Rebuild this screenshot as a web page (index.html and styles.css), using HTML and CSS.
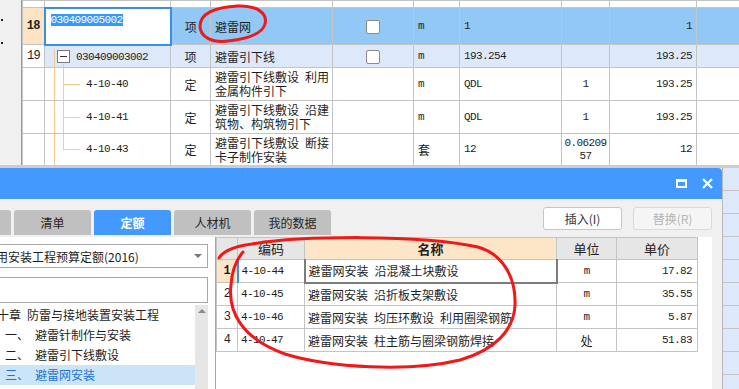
FILE: index.html
```html
<!DOCTYPE html>
<html lang="zh-CN">
<head>
    <meta charset="UTF-8">
    <title>查询定额</title>
    <link rel="stylesheet" href="styles.css">
</head>
<body>

    <!-- upper budget grid -->
    <div class="grid-area">
        <div class="side-strip">
            <span class="dot"></span>
            <span class="dot"></span>
        </div>
        <table class="grid">
            <colgroup>
                <col class="g-rn"><col class="g-code"><col class="g-type"><col class="g-name"><col class="g-chk">
                <col class="g-unit"><col class="g-qty"><col class="g-c8"><col class="g-c9"><col class="g-c10">
            </colgroup>
            <tr class="r-top">
                <td></td><td></td><td></td><td></td><td></td><td></td><td></td><td></td><td></td><td></td>
            </tr>
            <tr class="r-cur">
                <td class="rn cur mono">18</td>
                <td class="edit"><span class="sel mono">030409005002</span></td>
                <td class="ctr">项</td>
                <td>避雷网</td>
                <td class="ctr"><span class="chk"></span></td>
                <td class="mono">m</td>
                <td class="mono">1</td>
                <td></td>
                <td class="num mono">1</td>
                <td></td>
            </tr>
            <tr class="r-sub">
                <td class="rn mono">19</td>
                <td class="root"><span class="fold"></span><span class="mono">030409003002</span></td>
                <td class="ctr">项</td>
                <td>避雷引下线</td>
                <td class="ctr"><span class="chk"></span></td>
                <td class="mono">m</td>
                <td class="mono">193.254</td>
                <td></td>
                <td class="num mono">193.25</td>
                <td></td>
            </tr>
            <tr class="r-item">
                <td class="rn"></td>
                <td class="leaf mono">4-10-40</td>
                <td class="ctr">定</td>
                <td class="two">避雷引下线敷设&ensp;利用<br>金属构件引下</td>
                <td></td>
                <td class="mono">m</td>
                <td class="mono">QDL</td>
                <td class="ctr mono">1</td>
                <td class="num mono">193.25</td>
                <td></td>
            </tr>
            <tr class="r-item">
                <td class="rn"></td>
                <td class="leaf mono">4-10-41</td>
                <td class="ctr">定</td>
                <td class="two">避雷引下线敷设&ensp;沿建<br>筑物、构筑物引下</td>
                <td></td>
                <td class="mono">m</td>
                <td class="mono">QDL</td>
                <td class="ctr mono">1</td>
                <td class="num mono">193.25</td>
                <td></td>
            </tr>
            <tr class="r-item r-last">
                <td class="rn"></td>
                <td class="leaf last mono">4-10-43</td>
                <td class="ctr">定</td>
                <td class="two">避雷引下线敷设&ensp;断接<br>卡子制作安装</td>
                <td></td>
                <td>套</td>
                <td class="mono">12</td>
                <td class="ctr mono wrap">0.0620957</td>
                <td class="num mono">12</td>
                <td></td>
            </tr>
        </table>
    </div>

    <!-- quota lookup dialog -->
    <div class="lower">
        <div class="dialog">
            <div class="titlebar">
                <span class="tb-max"></span>
                <svg class="tb-close" width="11" height="11" viewBox="0 0 11 11">
                    <path d="M1 1 L10 10 M10 1 L1 10" stroke="#fff" stroke-width="2.2" fill="none"/>
                </svg>
            </div>
            <div class="dlg-body">
                <div class="toolbar">
                    <div class="tabs">
                        <span class="tab">指引</span>
                        <span class="tab">清单</span>
                        <span class="tab active">定额</span>
                        <span class="tab">人材机</span>
                        <span class="tab">我的数据</span>
                    </div>
                    <div class="actions">
                        <button class="btn">插入(I)</button>
                        <button class="btn" disabled>替换(R)</button>
                    </div>
                </div>
                <div class="panes">
                    <div class="lib-pane">
                        <div class="select">
                            <span class="select-text">用安装工程预算定额(2016)</span>
                            <span class="caret"></span>
                        </div>
                        <div class="search"></div>
                        <div class="tree">
                            <ul class="tree-list">
                                <li class="chapter">十章&ensp;防雷与接地装置安装工程</li>
                                <li><span class="ord">一、</span>避雷针制作与安装</li>
                                <li><span class="ord">二、</span>避雷引下线敷设</li>
                                <li class="picked"><span class="ord">三、</span>避雷网安装</li>
                            </ul>
                            <div class="scroll"></div>
                        </div>
                    </div>
                    <div class="list-pane">
                        <table class="list">
                            <colgroup>
                                <col class="l-rn"><col class="l-code"><col class="l-name"><col class="l-unit"><col class="l-price">
                            </colgroup>
                            <tr>
                                <th></th>
                                <th>编码</th>
                                <th class="hl">名称</th>
                                <th>单位</th>
                                <th>单价</th>
                            </tr>
                            <tr>
                                <td class="rn cur mono">1</td>
                                <td class="code cur mono">4-10-44</td>
                                <td class="focus">避雷网安装&ensp;沿混凝土块敷设</td>
                                <td class="ctr mono">m</td>
                                <td class="num mono">17.82</td>
                            </tr>
                            <tr>
                                <td class="rn mono">2</td>
                                <td class="code mono">4-10-45</td>
                                <td>避雷网安装&ensp;沿折板支架敷设</td>
                                <td class="ctr mono">m</td>
                                <td class="num mono">35.55</td>
                            </tr>
                            <tr>
                                <td class="rn mono">3</td>
                                <td class="code mono">4-10-46</td>
                                <td>避雷网安装&ensp;均压环敷设&ensp;利用圈梁钢筋</td>
                                <td class="ctr mono">m</td>
                                <td class="num mono">5.87</td>
                            </tr>
                            <tr>
                                <td class="rn mono">4</td>
                                <td class="code mono">4-10-47</td>
                                <td>避雷网安装&ensp;柱主筋与圈梁钢筋焊接</td>
                                <td class="ctr">处</td>
                                <td class="num mono">51.83</td>
                            </tr>
                        </table>
                    </div>
                </div>
            </div>
        </div>
        <div class="grid-strip"></div>
    </div>

    <!-- red hand-drawn marks on top of the screenshot -->
    <svg class="marks" width="739" height="389" viewBox="0 0 739 389">
        <path d="M236 6 C255 5 268 12 265 24 C262 35 246 39 228 41 C212 43 200 37 200 26 C200 14 214 7 238 6"
              fill="none" stroke="#f21818" stroke-width="3" stroke-linecap="round"/>
        <path d="M219 258 C224 250 236 246 252 244 C300 236 420 234 478 247 C505 255 516 280 515 305 C514 330 495 350 460 360 C410 372 330 368 285 354 C240 338 228 310 231 285 C232 270 236 260 243 252"
              fill="none" stroke="#f21818" stroke-width="3" stroke-linecap="round"/>
    </svg>

</body>
</html>
```

FILE: styles.css
```css
* {
    box-sizing: border-box;
}

html,
body {
    margin: 0;
    padding: 0;
}

body {
    position: relative;
    width: 739px;
    height: 389px;
    overflow: hidden;
    background-color: #fff;
    font-family: "Noto Sans CJK SC", "Liberation Sans", sans-serif;
    font-size: 12px;
    color: #1e1e1e;
}

/* SimSun-like half width digits */
.mono {
    font-family: "Liberation Mono", "Noto Sans CJK SC", monospace;
    font-size: 11px;
    letter-spacing: -0.6px;
}

/* ---------- upper grid ---------- */
.grid-area {
    display: flex;
    height: 168px;
    border-bottom: 3px solid #cdcdcd;
    overflow: hidden;
}

.side-strip {
    width: 22px;
    flex: none;
    background-color: #f0f0f0;
    border-right: 1px solid #9c9c9c;
    display: flex;
    flex-direction: column;
    gap: 21px;
    padding: 19px 0 0 1px;
}

.dot {
    width: 2px;
    height: 2px;
    background-color: #222;
}

.grid {
    width: 717px;
    table-layout: fixed;
    border-collapse: collapse;
}

.g-rn { width: 22px; }
.g-code { width: 126px; }
.g-type { width: 40px; }
.g-name { width: 122px; }
.g-chk { width: 81px; }
.g-unit { width: 46px; }
.g-qty { width: 102px; }
.g-c8 { width: 48px; }
.g-c9 { width: 87px; }
.g-c10 { width: 43px; }

.grid td {
    border: 1px solid #c4c4c4;
    padding: 0 4px;
    line-height: 13px;
    white-space: nowrap;
    overflow: hidden;
    vertical-align: middle;
}

.grid td.two {
    line-height: 14px;
}

.r-top { height: 7px; }
.r-cur { height: 37px; }
.r-sub { height: 23px; }
.r-item { height: 33px; }
.r-last { height: 32px; }

.r-cur td {
    background-color: #92c8f6;
}

.r-sub td {
    background-color: #dde9fb;
}

.grid .rn {
    background-color: #fff;
    text-align: center;
    font-size: 12px;
    padding: 0;
}

.grid .rn.cur {
    background-color: #fce3c4;
    font-weight: bold;
}

.grid .edit {
    background-color: #fff;
    border: 2px solid #3b8ee8;
    vertical-align: top;
    padding: 2px 5px;
}

.sel {
    background-color: #3399ff;
    color: #fff;
}

.ctr {
    text-align: center;
}

.num {
    text-align: right;
}

.grid .wrap {
    white-space: normal;
    word-break: break-all;
    padding: 0 2px;
}

.chk {
    display: inline-block;
    width: 14px;
    height: 14px;
    border: 1px solid #8a8a8a;
    border-radius: 2px;
    background-color: #fff;
    vertical-align: middle;
}

/* tree lines in the code column */
.grid .root {
    padding-left: 12px;
    background-image:
        linear-gradient(#f6c98e, #f6c98e),
        linear-gradient(#f6c98e, #f6c98e);
    background-repeat: no-repeat;
    background-position: 9px 3px, 18px 18px;
    background-size: 1px 100%, 1px 100%;
}

.fold {
    display: inline-block;
    width: 13px;
    height: 13px;
    margin-right: 6px;
    border: 1px solid #7a7a7a;
    background: #fff linear-gradient(#333, #333) center / 7px 1px no-repeat;
    vertical-align: middle;
}

.grid .leaf {
    padding-left: 41px;
    background-image:
        linear-gradient(#f6c98e, #f6c98e),
        linear-gradient(#f6c98e, #f6c98e),
        linear-gradient(#f6c98e, #f6c98e);
    background-repeat: no-repeat;
    background-position: 9px 0, 18px 0, 18px 50%;
    background-size: 1px 100%, 1px 100%, 17px 1px;
}

.grid .leaf.last {
    background-size: 1px 100%, 1px 50%, 17px 1px;
}

/* ---------- dialog ---------- */
.lower {
    display: flex;
    height: 221px;
}

.dialog {
    width: 722px;
    flex: none;
    display: flex;
    flex-direction: column;
}

.titlebar {
    height: 31px;
    flex: none;
    background-color: #4499ff;
    border-top-right-radius: 4px;
    display: flex;
    align-items: center;
    justify-content: flex-end;
    gap: 15px;
    padding-right: 9px;
}

.tb-max {
    width: 11px;
    height: 9px;
    border: 2px solid #fff;
    border-top-width: 3px;
}

.dlg-body {
    flex: 1;
    background-color: #f0f0f0;
    display: flex;
    flex-direction: column;
}

.toolbar {
    height: 36px;
    flex: none;
    display: flex;
}

.tabs {
    display: flex;
    align-items: flex-end;
    gap: 3px;
    margin-left: -66px;
}

.tab {
    width: 77px;
    height: 25px;
    line-height: 25px;
    text-align: center;
    background-color: #c0c0c0;
    border-radius: 3px 3px 0 0;
    color: #262626;
    font-size: 12px;
}

.tab.active {
    background-color: #4499ff;
    color: #fff;
    font-weight: bold;
}

.actions {
    margin-left: auto;
    display: flex;
    gap: 11px;
    padding: 8px 10px 0 0;
}

.btn {
    width: 79px;
    height: 23px;
    padding: 0;
    border: 1px solid #c6c6c6;
    border-radius: 3px;
    background-color: #fff;
    font-family: "Noto Sans CJK SC", sans-serif;
    font-size: 12px;
    color: #333;
}

.btn:disabled {
    background-color: #f5f5f5;
    border-color: #dadada;
    color: #b4b4b4;
}

.panes {
    flex: 1;
    display: flex;
    padding-top: 2px;
    min-height: 0;
}

.lib-pane {
    width: 216px;
    flex: none;
    background-color: #fff;
    border-right: 1px solid #a8a8a8;
    padding: 7px 7px 0 0;
    display: flex;
    flex-direction: column;
}

.select {
    height: 24px;
    margin-left: -1px;
    border: 1px solid #a9a9a9;
    display: flex;
    align-items: center;
    padding-right: 5px;
}

.select-text {
    flex: 1;
    text-indent: -4px;
    white-space: nowrap;
    overflow: hidden;
}

.caret {
    width: 0;
    height: 0;
    border-left: 4px solid transparent;
    border-right: 4px solid transparent;
    border-top: 4px solid #777;
}

.search {
    height: 26px;
    margin: 9px 0 0 -1px;
    border: 1px solid #a9a9a9;
}

.tree {
    flex: 1;
    display: flex;
    margin-top: 2px;
}

.tree-list {
    flex: 1;
    list-style: none;
    margin: 0;
    padding: 0;
}

.tree-list li {
    height: 20px;
    line-height: 20px;
    padding-left: 5px;
    white-space: nowrap;
    color: #1e1e1e;
}

.tree-list .chapter {
    padding-left: 0;
    text-indent: -3px;
}

.ord {
    display: inline-block;
    width: 30px;
}

.tree-list .picked {
    background-color: #cce4f7;
    color: #1c74d9;
}

.scroll {
    width: 13px;
    background-color: #e6e6e6;
    padding: 4px 0 0 3px;
}

.scroll::before {
    content: "";
    display: block;
    width: 0;
    height: 0;
    border-left: 4px solid transparent;
    border-right: 4px solid transparent;
    border-bottom: 4px solid #8a8a8a;
}

.list-pane {
    width: 496px;
    flex: none;
    background-color: #fff;
}

.list {
    width: 481px;
    table-layout: fixed;
    border-collapse: collapse;
}

.l-rn { width: 21px; }
.l-code { width: 67px; }
.l-name { width: 252px; }
.l-unit { width: 60px; }
.l-price { width: 81px; }

.list th,
.list td {
    border: 1px solid #c4c4c4;
    padding: 0 3px;
    white-space: nowrap;
    overflow: hidden;
}

.list th {
    height: 22px;
    background-color: #e6e6e6;
    font-weight: normal;
    font-size: 13px;
    color: #222;
}

.list th.hl {
    background-color: #fde6c8;
    font-weight: bold;
}

.list td {
    height: 23px;
}

.list .rn {
    text-align: center;
    font-size: 12px;
    padding: 0;
}

.list .rn.cur {
    background-color: #fde6c8;
    font-weight: bold;
}

.list .code.cur {
    border-left: 2px solid #3b8ee8;
}

.list .focus {
    border: 2px solid #7d7d7d;
    border-top: 1px solid #3b8ee8;
}

.list .num {
    padding-right: 5px;
}

.grid-strip {
    flex: 1;
    border-left: 1px solid #b8b8b8;
    background: repeating-linear-gradient(to bottom, #dde9fb 0 22px, #c4c4c4 22px 23px);
}

.marks {
    position: absolute;
    top: 0;
    left: 0;
    pointer-events: none;
}
```
